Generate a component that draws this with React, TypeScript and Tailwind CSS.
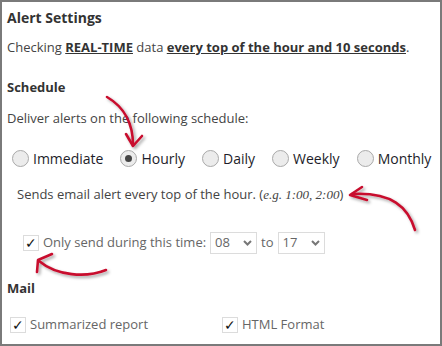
import React from "react";

function Radio({ label, checked }: { label: string; checked?: boolean }) {
  return (
    <label className="flex items-center gap-[4px]">
      <span className="flex h-[17px] w-[17px] items-center justify-center rounded-full border border-[#a9a9a9] bg-[#ececec]">
        {checked && <span className="h-[7px] w-[7px] rounded-full bg-[#444]" />}
      </span>
      <span className="text-[#1d1d2a]">{label}</span>
    </label>
  );
}

function Check({ label }: { label: string }) {
  return (
    <label className="flex items-center gap-[4px]">
      <span className="flex h-[16px] w-[16px] items-center justify-center border border-[#dcdcdc] bg-white text-[14px] leading-none text-[#111]">
        ✓
      </span>
      <span>{label}</span>
    </label>
  );
}

function Select({ value }: { value: string }) {
  return (
    <span className="flex h-[22px] w-[47px] items-center justify-between border border-[#dcdcdc] bg-white px-[4px] text-[#666]">
      <span>{value}</span>
      <svg width="9" height="6" viewBox="0 0 9 6">
        <path d="M1 1l3.5 3.5L8 1" fill="none" stroke="#777" strokeWidth="2" />
      </svg>
    </span>
  );
}

function Arrows() {
  return (
    <svg className="pointer-events-none absolute inset-0" width="442" height="346">
      <defs>
        <filter id="sh" x="-20%" y="-20%" width="140%" height="140%">
          <feDropShadow dx="2" dy="2" stdDeviation="1.5" floodColor="#000" floodOpacity="0.35" />
        </filter>
      </defs>
      <g fill="none" stroke="#c8102e" strokeWidth="2.6" strokeLinecap="round" strokeLinejoin="round" filter="url(#sh)">
        <path d="M105 95 C122 105 131 120 131 143" />
        <path d="M124 132 L131 144 L140 134" />
        <path d="M413 228 C406 205 390 190 350 192" />
        <path d="M360 185 L348 193 L365 198" />
        <path d="M104 268 C84 276 55 274 37 259" />
        <path d="M50 252 L36 258 L35 270" />
      </g>
    </svg>
  );
}

export default function App() {
  return (
    <div className="relative h-[346px] w-[442px] overflow-hidden border-2 border-[#7a7a7a] bg-white font-['Open_Sans',sans-serif] text-[13px] text-[#444]">
      <div className="px-[5px] pt-[3px]">
        <h2 className="text-[14px] font-bold leading-[26px] text-[#333]">Alert Settings</h2>
        <p className="mt-[6px] leading-[20px]">
          Checking <b className="font-bold text-[#333] underline">REAL-TIME</b> data{" "}
          <b className="font-bold text-[#333] underline">every top of the hour and 10 seconds</b>.
        </p>
        <h3 className="mt-[20px] font-bold leading-[20px] text-[#333]">Schedule</h3>
        <p className="mt-[11px] leading-[20px]">Deliver alerts on the following schedule:</p>
        <div className="mt-[20px] flex items-center gap-[17px] pl-[5px] text-[14px]">
          <Radio label="Immediate" />
          <Radio label="Hourly" checked />
          <Radio label="Daily" />
          <Radio label="Weekly" />
          <Radio label="Monthly" />
        </div>
        <p className="mt-[15px] pl-[10px] leading-[20px]">
          Sends email alert every top of the hour. (
          <i className="font-['Liberation_Serif',serif] text-[13px]">e.g. 1:00, 2:00</i>)
        </p>
        <div className="mt-[27px] flex items-center gap-[4px] pl-[16px] text-[#666]">
          <Check label="Only send during this time:" />
          <Select value="08" />
          <span>to</span>
          <Select value="17" />
        </div>
        <h3 className="mt-[24px] font-bold leading-[20px] text-[#333]">Mail</h3>
        <div className="mt-[17px] flex items-center pl-[3px] text-[#666]">
          <div className="w-[212px]">
            <Check label="Summarized report" />
          </div>
          <Check label="HTML Format" />
        </div>
      </div>
      <Arrows />
    </div>
  );
}
